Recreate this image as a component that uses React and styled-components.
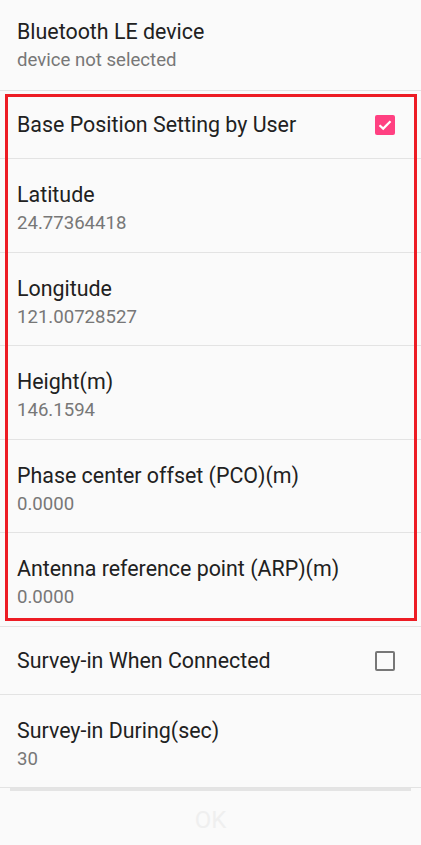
import React from "react"
import styled, { createGlobalStyle } from "styled-components"

const GlobalStyle = createGlobalStyle`
  html, body {
    margin: 0;
    padding: 0;
    background: #fafafa;
  }
  * {
    box-sizing: border-box;
  }
`

const Screen = styled.div`
  width: 421px;
  height: 845px;
  overflow: hidden;
  background: #fafafa;
  font-family: Roboto, "Noto Sans", sans-serif;
  display: flex;
  flex-direction: column;
`

const Row = styled.div`
  display: flex;
  align-items: ${(p) => (p.$single ? "center" : "flex-start")};
  justify-content: space-between;
  height: ${(p) => p.$height}px;
  margin-top: ${(p) => p.$shift || 0}px;
  padding: ${(p) => (p.$single ? "1px 26px 0 17px" : "24px 26px 0 17px")};
  border-bottom: 1px solid #e3e3e3;
  flex-shrink: 0;
`

const Texts = styled.div`
  display: flex;
  flex-direction: column;
  gap: 5px;
`

const Title = styled.div`
  font-size: 21.4px;
  font-weight: 400;
  line-height: 24px;
  color: #212121;
`

const Summary = styled.div`
  font-size: 18.6px;
  font-weight: 400;
  line-height: 22px;
  color: #777777;
`

const Group = styled.div`
  position: relative;
  display: flex;
  flex-direction: column;
`

const Highlight = styled.div`
  position: absolute;
  top: 3px;
  left: 5px;
  right: 4px;
  bottom: 6px;
  border: 3px solid #ed1c24;
  pointer-events: none;
`

const Box = styled.span`
  width: 20px;
  height: 20px;
  border-radius: 2px;
  display: flex;
  align-items: center;
  justify-content: center;
  background: ${(p) => (p.$checked ? "#ff4081" : "transparent")};
  border: ${(p) => (p.$checked ? "none" : "2px solid #777777")};
`

const ButtonBar = styled.div`
  margin: 0 10px;
  border-top: 3px solid #e4e4e4;
  padding-top: 15px;
  display: flex;
  justify-content: center;
`

const OkButton = styled.div`
  font-size: 24px;
  line-height: 28px;
  color: #efefef;
`

const CheckBox = ({ checked }) => (
  <Box $checked={checked}>
    {checked && (
      <svg width="14" height="12" viewBox="0 0 14 12">
        <path d="M1.5 6.2 L5.2 9.6 L12.5 2.2" fill="none" stroke="#fff" strokeWidth="2.2" />
      </svg>
    )}
  </Box>
)

const TwoLine = ({ title, summary, height = 93.6, shift }) => (
  <Row $height={height} $shift={shift}>
    <Texts>
      <Title>{title}</Title>
      <Summary>{summary}</Summary>
    </Texts>
  </Row>
)

const CheckRow = ({ title, checked }) => (
  <Row $single $height={68}>
    <Title>{title}</Title>
    <CheckBox checked={checked} />
  </Row>
)

const App = () => {
  return (
    <Screen>
      <GlobalStyle />
      <TwoLine title="Bluetooth LE device" summary="device not selected" height={95} shift={-4} />
      <Group>
        <CheckRow title="Base Position Setting by User" checked />
        <TwoLine title="Latitude" summary="24.77364418" />
        <TwoLine title="Longitude" summary="121.00728527" />
        <TwoLine title="Height(m)" summary="146.1594" />
        <TwoLine title="Phase center offset (PCO)(m)" summary="0.0000" />
        <TwoLine title="Antenna reference point (ARP)(m)" summary="0.0000" />
        <Highlight />
      </Group>
      <CheckRow title="Survey-in When Connected" />
      <TwoLine title="Survey-in During(sec)" summary="30" height={93} />
      <ButtonBar>
        <OkButton>OK</OkButton>
      </ButtonBar>
    </Screen>
  )
}

export default App
